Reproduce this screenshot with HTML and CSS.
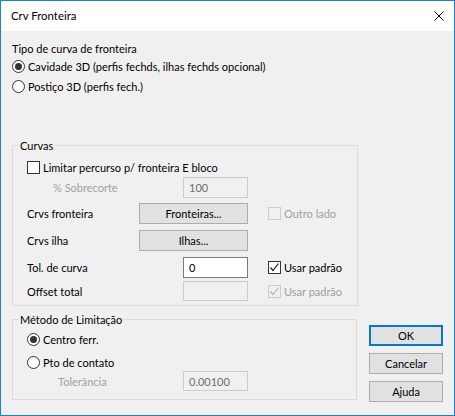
FILE: index.html
```html
<!DOCTYPE html>
<html lang="pt">
<head>
<meta charset="utf-8">
<title>Crv Fronteira</title>
<link rel="stylesheet" href="styles.css">
</head>
<body>
<div class="window">
  <div class="titlebar">
    <span class="title">Crv Fronteira</span>
    <svg class="close" width="10" height="10" viewBox="0 0 10 10"><path d="M0.5 0.5 L9.5 9.5 M9.5 0.5 L0.5 9.5" stroke="#000" stroke-width="1" fill="none"/></svg>
  </div>
  <div class="content">
    <div class="section-label">Tipo de curva de fronteira</div>
    <div class="opt opt-first"><span class="radio checked"></span><span>Cavidade 3D (perfis fechds, ilhas fechds opcional)</span></div>
    <div class="opt opt-second"><span class="radio"></span><span>Postiço 3D (perfis fech.)</span></div>

    <fieldset class="group curvas">
      <legend>Curvas</legend>
      <div class="group-body">
        <div class="opt row-limit"><span class="check"></span><span>Limitar percurso p/ fronteira E bloco</span></div>
        <div class="frow row-sobre">
          <span class="lbl disabled-text indent-a">% Sobrecorte</span>
          <span class="textbox tb-disabled">100</span>
        </div>
        <div class="frow row-front">
          <span class="lbl">Crvs fronteira</span>
          <span class="btn">Fronteiras...</span>
          <span></span>
          <span class="opt"><span class="check check-disabled"></span><span class="disabled-text">Outro lado</span></span>
        </div>
        <div class="frow row-ilha">
          <span class="lbl">Crvs ilha</span>
          <span class="btn">Ilhas...</span>
        </div>
        <div class="frow row-tol">
          <span class="lbl">Tol. de curva</span>
          <span class="textbox">0</span>
          <span></span>
          <span class="opt"><span class="check"><svg width="11" height="11" viewBox="0 0 11 11"><path d="M1.5 5.5 L4 8.5 L9.5 1.5" stroke="#222" stroke-width="1.2" fill="none"/></svg></span><span>Usar padrão</span></span>
        </div>
        <div class="frow row-offset">
          <span class="lbl">Offset total</span>
          <span class="textbox tb-disabled"></span>
          <span></span>
          <span class="opt"><span class="check check-disabled"><svg width="11" height="11" viewBox="0 0 11 11"><path d="M1.5 5.5 L4 8.5 L9.5 1.5" stroke="#b5b5b5" stroke-width="1.2" fill="none"/></svg></span><span class="disabled-text">Usar padrão</span></span>
        </div>
      </div>
    </fieldset>

    <div class="bottom">
      <fieldset class="group metodo">
        <legend>Método de Limitação</legend>
        <div class="group-body metodo-body">
          <div class="opt"><span class="radio checked"></span><span>Centro ferr.</span></div>
          <div class="opt opt-pto"><span class="radio"></span><span>Pto de contato</span></div>
          <div class="frow row-tolerancia">
            <span class="lbl disabled-text indent-b">Tolerância</span>
            <span class="textbox tb-disabled">0.00100</span>
          </div>
        </div>
      </fieldset>
      <div class="buttons">
        <span class="btn btn-default">OK</span>
        <span class="btn">Cancelar</span>
        <span class="btn">Ajuda</span>
      </div>
    </div>
  </div>
</div>
</body>
</html>
```
FILE: styles.css
```css
* { box-sizing: border-box; }
html, body { margin: 0; padding: 0; }
body {
  font-family: "Lato", "Noto Sans", sans-serif;
  font-size: 11px;
  line-height: 15px;
  color: #000;
  background: #fff;
}
.window {
  width: 455px;
  height: 416px;
  border: 1px solid #1a80d6;
  display: flex;
  flex-direction: column;
}
.titlebar {
  height: 30px;
  background: #fff;
  display: flex;
  align-items: center;
  justify-content: space-between;
  padding: 0 10px 0 10px;
  font-size: 11.4px;
}
.title { position: relative; top: -1px; }
.close { display: block; }
.content {
  flex: 1;
  background: #f0f0f0;
  padding: 10px 11px 0 11px;
}
.section-label { height: 15px; }
.opt {
  display: flex;
  align-items: center;
  gap: 3px;
  height: 15px;
  white-space: nowrap;
}
.opt-first { margin-top: 3px; }
.opt-second { margin-top: 5px; }
.radio {
  width: 13px;
  height: 13px;
  border: 1px solid #333;
  border-radius: 50%;
  background: #fff;
  display: flex;
  align-items: center;
  justify-content: center;
  flex: none;
}
.radio.checked::after {
  content: "";
  width: 7px;
  height: 7px;
  border-radius: 50%;
  background: #333;
}
.check {
  width: 13px;
  height: 13px;
  border: 1px solid #333;
  background: #fff;
  flex: none;
  display: flex;
}
.check svg { display: block; }
.check-disabled { border-color: #cccccc; background: #f0f0f0; }
.disabled-text { color: #a0a0a0; }

.group {
  margin: 0;
  padding: 0;
  border: 1px solid #dcdcdc;
  width: 346px;
  min-inline-size: 0;
}
.group legend {
  margin-left: 6px;
  padding: 0 1px;
  line-height: 15px;
}
.curvas { margin-top: 44px; }
.group-body { padding: 6px 0 4px 14px; }
.row-limit { height: 17px; }
.frow {
  display: grid;
  grid-template-columns: 112px 109px 20px auto;
  align-items: center;
}
.row-sobre { height: 21px; margin-top: 1px; }
.row-front { height: 21px; margin-top: 5px; }
.row-ilha { height: 21px; margin-top: 6px; }
.row-tol { height: 21px; margin-top: 6px; }
.row-offset { height: 20px; margin-top: 3px; }
.indent-a { padding-left: 26px; }
.indent-b { padding-left: 31px; }
.lbl { white-space: nowrap; }
.textbox {
  grid-column: 2;
  justify-self: end;
  width: 65px;
  height: 100%;
  border: 1px solid #7a7a7a;
  background: #fff;
  padding: 0 5px;
  display: flex;
  align-items: center;
}
.tb-disabled {
  border-color: #cccccc;
  background: #f0f0f0;
  color: #6d6d6d;
}
.btn {
  height: 21px;
  border: 1px solid #adadad;
  background: #e1e1e1;
  display: flex;
  align-items: center;
  justify-content: center;
}
.frow .btn { height: 100%; }
.btn-default { border: 2px solid #0078d7; }

.bottom {
  display: flex;
  align-items: flex-start;
  margin-top: 6px;
}
.metodo-body { padding: 5px 0 8px 14px; }
.opt-pto { margin-top: 8px; }
.row-tolerancia { height: 20px; margin-top: 1px; }
.buttons {
  margin-left: 12px;
  margin-top: 13px;
  width: 74px;
  display: flex;
  flex-direction: column;
  gap: 7px;
}
```
